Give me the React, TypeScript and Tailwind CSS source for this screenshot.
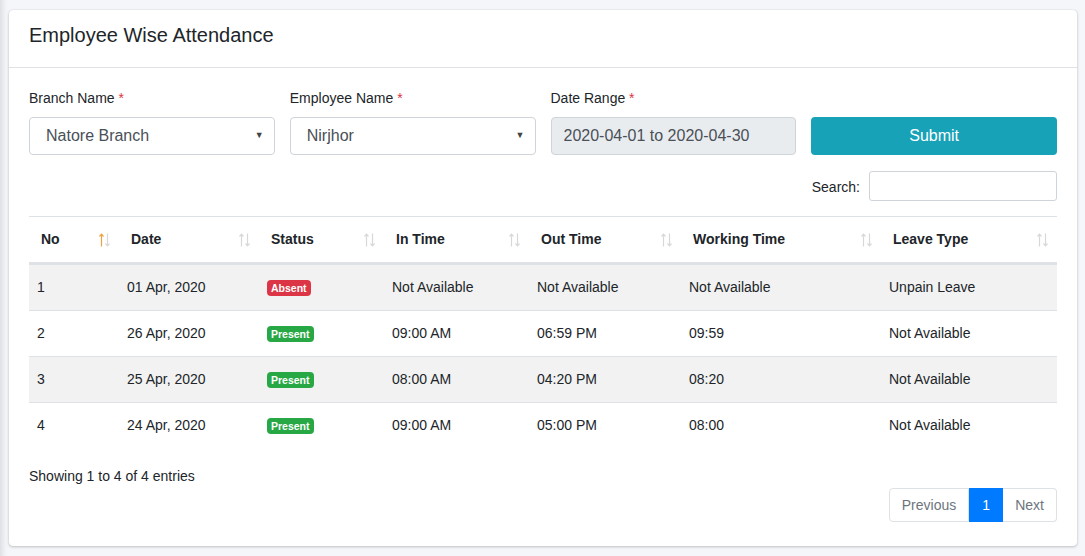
import React from "react";

type Row = {
  no: number;
  date: string;
  status: "Absent" | "Present";
  inTime: string;
  outTime: string;
  working: string;
  leave: string;
};

const rows: Row[] = [
  { no: 1, date: "01 Apr, 2020", status: "Absent", inTime: "Not Available", outTime: "Not Available", working: "Not Available", leave: "Unpain Leave" },
  { no: 2, date: "26 Apr, 2020", status: "Present", inTime: "09:00 AM", outTime: "06:59 PM", working: "09:59", leave: "Not Available" },
  { no: 3, date: "25 Apr, 2020", status: "Present", inTime: "08:00 AM", outTime: "04:20 PM", working: "08:20", leave: "Not Available" },
  { no: 4, date: "24 Apr, 2020", status: "Present", inTime: "09:00 AM", outTime: "05:00 PM", working: "08:00", leave: "Not Available" },
];

const columns = [
  { label: "No", w: "w-[90px]", active: true },
  { label: "Date", w: "w-[140px]" },
  { label: "Status", w: "w-[125px]" },
  { label: "In Time", w: "w-[145px]" },
  { label: "Out Time", w: "w-[152px]" },
  { label: "Working Time", w: "w-[200px]" },
  { label: "Leave Type", w: "w-[176px]" },
];

// up/down sort arrows like DataTables' bootstrap theme
const SortIcon = ({ active }: { active?: boolean }) => (
  <svg
    width="12"
    height="16"
    viewBox="0 0 12 16"
    className="absolute right-[8px] top-1/2 -translate-y-1/2"
    fill="none"
    strokeWidth="1.2"
  >
    <g stroke={active ? "#f0a040" : "#d8d8d8"}>
      <path d="M2.5 2.5V14.5" />
      <path d="M0.5 4.5L2.5 2.2L4.5 4.5" />
    </g>
    <g stroke="#d8d8d8">
      <path d="M8.5 1.5V13.5" />
      <path d="M6.5 11.5L8.5 13.8L10.5 11.5" />
    </g>
  </svg>
);

const Select = ({ value }: { value: string }) => (
  <div className="h-[38px] flex items-center justify-between border border-[#ced4da] rounded-[4px] pl-[16px] pr-[10px] text-[16px] text-[#495057] bg-white">
    <span>{value}</span>
    <span className="text-[9px] text-[#444]">▼</span>
  </div>
);

const Label = ({ text }: { text: string }) => (
  <div className="text-[14px] leading-[21px] text-[#212529] mb-[8px]">
    {text} <span className="text-[#dc3545]">*</span>
  </div>
);

const td = "pl-[8px] py-[12px] leading-[21px] border-t border-[#dee2e6]";

export default function App() {
  return (
    <div
      className="min-h-[556px] bg-[#f4f6f9] pl-[9px] pr-[8px] pt-[10px] pb-[9px] shadow-[inset_8px_0_6px_-6px_rgba(0,0,0,0.12)]"
      style={{ fontFamily: '"Liberation Sans", Arial, sans-serif' }}
    >
      <div className="bg-white rounded-[4px] shadow-[0_0_1px_rgba(0,0,0,0.2),0_1px_3px_rgba(0,0,0,0.2)]">
        <div className="h-[58px] px-[20px] pt-[13px] border-b border-[#dfe1e4]">
          <h3 className="text-[20px] leading-[24px] text-[#212529] font-normal">Employee Wise Attendance</h3>
        </div>
        <div className="px-[20px] pt-[20px] pb-[24px]">
          <div className="grid grid-cols-4 gap-x-[15px]">
            <div>
              <Label text="Branch Name" />
              <Select value="Natore Branch" />
            </div>
            <div>
              <Label text="Employee Name" />
              <Select value="Nirjhor" />
            </div>
            <div>
              <Label text="Date Range" />
              <div className="h-[38px] flex items-center border border-[#ced4da] rounded-[4px] px-[12px] text-[16px] text-[#495057] bg-[#e9ecef]">
                2020-04-01 to 2020-04-30
              </div>
            </div>
            <div className="flex flex-col justify-end">
              <button className="h-[38px] rounded-[4px] bg-[#17a2b8] text-white text-[16px]">Submit</button>
            </div>
          </div>

          <div className="flex justify-end items-center mt-[16px] text-[14px] text-[#212529]">
            <span className="mr-[9px] mt-[2px]">Search:</span>
            <div className="w-[188px] h-[30px] border border-[#ced4da] rounded-[3px]" />
          </div>

          <table className="w-full mt-[15px] border-collapse text-[14px] text-[#212529] table-fixed">
            <thead>
              <tr>
                {columns.map((c) => (
                  <th
                    key={c.label}
                    className={`${c.w} relative text-left font-bold pl-[12px] py-[12px] leading-[21px] border-t border-b-[3px] border-[#dee2e6]`}
                  >
                    {c.label}
                    <SortIcon active={c.active} />
                  </th>
                ))}
              </tr>
            </thead>
            <tbody>
              {rows.map((r, i) => (
                <tr key={r.no} className={i % 2 === 0 ? "bg-[#f2f2f2]" : "bg-white"}>
                  <td className={td}>{r.no}</td>
                  <td className={td}>{r.date}</td>
                  <td className={td}>
                    <span
                      className={`inline-block px-[4px] py-[2px] rounded-[4px] text-[10.5px] font-bold leading-[12px] text-white align-middle ${
                        r.status === "Absent" ? "bg-[#dc3545]" : "bg-[#28a745]"
                      }`}
                    >
                      {r.status}
                    </span>
                  </td>
                  <td className={td}>{r.inTime}</td>
                  <td className={td}>{r.outTime}</td>
                  <td className={td}>{r.working}</td>
                  <td className={td}>{r.leave}</td>
                </tr>
              ))}
            </tbody>
          </table>

          <div className="mt-[18px] text-[14px] leading-[21px] text-[#212529]">Showing 1 to 4 of 4 entries</div>

          <div className="flex justify-end mt-[1px]">
            <div className="flex h-[34px] text-[14px]">
              <span className="flex items-center px-[12px] border border-[#dee2e6] rounded-l-[4px] text-[#6c757d]">Previous</span>
              <span className="flex items-center justify-center w-[34px] bg-[#007bff] border border-[#007bff] text-white">1</span>
              <span className="flex items-center px-[12px] border border-l-0 border-[#dee2e6] rounded-r-[4px] text-[#6c757d]">Next</span>
            </div>
          </div>
        </div>
      </div>
    </div>
  );
}
